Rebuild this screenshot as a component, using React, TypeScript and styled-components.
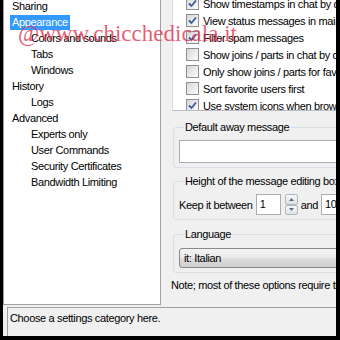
import React from 'react'
import styled, { createGlobalStyle, css } from 'styled-components'

const GlobalStyle = createGlobalStyle`
  html, body {
    margin: 0;
    padding: 0;
    background: #000;
  }
  body {
    font-family: 'Liberation Sans', Arial, sans-serif;
    font-size: 11px;
    letter-spacing: -0.35px;
    color: #000;
  }
`

const Frame = styled.div`
  position: relative;
  width: 340px;
  height: 340px;
  box-sizing: border-box;
  border-left: 3px solid #000;
  border-right: 4px solid #000;
  border-bottom: 4px solid #000;
  background: #f0f0f0;
  display: flex;
  flex-direction: column;
  overflow: hidden;
`

const Main = styled.div`
  display: flex;
  height: 305px;
  flex-shrink: 0;
`

const Tree = styled.div`
  width: 158px;
  box-sizing: border-box;
  background: #fff;
  border-left: 1px solid #a0a0a0;
  border-right: 1px solid #a0a0a0;
  border-bottom: 1px solid #a0a0a0;
  overflow: hidden;
`

const TreeList = styled.div`
  margin-top: -2px;
  display: flex;
  flex-direction: column;
`

const TreeRow = styled.div<{ $child?: boolean }>`
  height: 16px;
  display: flex;
  align-items: center;
  padding-left: ${(p) => (p.$child ? 27 : 8)}px;
  white-space: nowrap;
`

const TreeLabel = styled.span<{ $selected?: boolean }>`
  padding: 1px 2px;
  margin-left: -2px;
  line-height: 13px;
  ${(p) =>
    p.$selected &&
    css`
      background: #3399ff;
      color: #fff;
    `}
`

const Panel = styled.div`
  flex: 1;
  overflow: hidden;
  padding-left: 11px;
  display: flex;
  flex-direction: column;
`

const CheckList = styled.div`
  height: 111px;
  flex-shrink: 0;
  box-sizing: border-box;
  background: #fff;
  border-left: 1px solid #d5dfe5;
  border-bottom: 1px solid #b8bcc2;
  overflow: hidden;
`

const CheckRows = styled.div`
  margin-top: -5px;
`

const CheckRow = styled.div`
  height: 17px;
  display: flex;
  align-items: center;
  gap: 4px;
  padding-left: 13px;
  white-space: nowrap;
`

const Box = styled.span`
  width: 13px;
  height: 13px;
  box-sizing: border-box;
  border: 1px solid #8e8f8f;
  background: linear-gradient(135deg, #d6d6d6, #fdfdfd);
  display: flex;
  align-items: center;
  justify-content: center;
  flex-shrink: 0;
`

const Group = styled.fieldset<{ $top: number }>`
  margin: ${(p) => p.$top}px 0 0 1px;
  padding: 0 0 4px 5px;
  width: 220px;
  border: 1px solid #d5dfe5;
  border-radius: 3px;
  min-width: 0;
`

const Legend = styled.legend`
  padding: 0 1px;
  margin-left: 5px;
  line-height: 13px;
  white-space: nowrap;
`

const TextBox = styled.div<{ $h: number; $w?: number }>`
  height: ${(p) => p.$h}px;
  width: ${(p) => (p.$w ? `${p.$w}px` : 'auto')};
  box-sizing: border-box;
  background: #fff;
  border: 1px solid #abadb3;
  padding: 2px 3px;
  line-height: 14px;
  flex-shrink: 0;
`

const Row = styled.div`
  display: flex;
  align-items: center;
  height: 21px;
  gap: 3px;
  white-space: nowrap;
`

const Spinner = styled.div`
  display: flex;
  flex-direction: column;
  width: 13px;
  height: 21px;
  flex-shrink: 0;
  margin-left: 1px;
`

const SpinButton = styled.div`
  flex: 1;
  box-sizing: border-box;
  border: 1px solid #b1b7bf;
  border-radius: 2px;
  background: linear-gradient(#f6f7f9, #dde2e8);
  display: flex;
  align-items: center;
  justify-content: center;
`

const Select = styled.div`
  height: 20px;
  box-sizing: border-box;
  border: 1px solid #8a8a8a;
  border-radius: 3px;
  background: linear-gradient(#f3f3f3 0%, #ebebeb 50%, #dddddd 51%, #cfcfcf 100%);
  padding-left: 4px;
  display: flex;
  align-items: center;
`

const Note = styled.div`
  margin: 6px 0 0 -1px;
  line-height: 13px;
  white-space: nowrap;
`

const Status = styled.div`
  flex: 1;
  margin: 2px 0 0 4px;
  border-top: 1px solid #a0a0a0;
  border-left: 1px solid #a0a0a0;
  padding: 4px 2px;
  line-height: 13px;
`

const Watermark = styled.div`
  position: absolute;
  left: 15px;
  top: 21px;
  font-family: 'Liberation Serif', 'Times New Roman', serif;
  font-size: 23px;
  letter-spacing: 0;
  color: rgba(224, 48, 80, 0.78);
  white-space: nowrap;
  pointer-events: none;
`

const Check = () => (
  <svg width="9" height="9" viewBox="0 0 9 9">
    <path d="M1 4.5 L3.5 7 L8 1.5" fill="none" stroke="#3c5a9a" strokeWidth="1.8" />
  </svg>
)

const Arrow = ({ up }: { up?: boolean }) => (
  <svg width="5" height="3" viewBox="0 0 5 3">
    <path d={up ? 'M0 3 L2.5 0 L5 3 Z' : 'M0 0 L2.5 3 L5 0 Z'} fill="#5d6b82" />
  </svg>
)

const tree: { label: string; child?: boolean; selected?: boolean }[] = [
  { label: 'Sharing' },
  { label: 'Appearance', selected: true },
  { label: 'Colors and sounds', child: true },
  { label: 'Tabs', child: true },
  { label: 'Windows', child: true },
  { label: 'History' },
  { label: 'Logs', child: true },
  { label: 'Advanced' },
  { label: 'Experts only', child: true },
  { label: 'User Commands', child: true },
  { label: 'Security Certificates', child: true },
  { label: 'Bandwidth Limiting', child: true },
]

const options: [string, boolean][] = [
  ['Show timestamps in chat by default', true],
  ['View status messages in main chat', true],
  ['Filter spam messages', true],
  ['Show joins / parts in chat by default', false],
  ['Only show joins / parts for favorite users', false],
  ['Sort favorite users first', false],
  ['Use system icons when browsing files', true],
]

const App: React.FC = () => {
  return (
    <>
      <GlobalStyle />
      <Frame>
        <Main>
          <Tree>
            <TreeList>
              {tree.map((t) => (
                <TreeRow key={t.label} $child={t.child}>
                  <TreeLabel $selected={t.selected}>{t.label}</TreeLabel>
                </TreeRow>
              ))}
            </TreeList>
          </Tree>
          <Panel>
            <CheckList>
              <CheckRows>
                {options.map(([label, on]) => (
                  <CheckRow key={label}>
                    <Box>{on && <Check />}</Box>
                    <span>{label}</span>
                  </CheckRow>
                ))}
              </CheckRows>
            </CheckList>
            <Group $top={10}>
              <Legend>Default away message</Legend>
              <TextBox $h={23} style={{ marginTop: 6 }} />
            </Group>
            <Group $top={7}>
              <Legend>Height of the message editing box</Legend>
              <Row style={{ marginTop: 6 }}>
                <span>Keep it between</span>
                <TextBox $h={21} $w={25}>1</TextBox>
                <Spinner>
                  <SpinButton>
                    <Arrow up />
                  </SpinButton>
                  <SpinButton>
                    <Arrow />
                  </SpinButton>
                </Spinner>
                <span>and</span>
                <TextBox $h={21} $w={30}>10</TextBox>
              </Row>
            </Group>
            <Group $top={8}>
              <Legend>Language</Legend>
              <Select style={{ marginTop: 7 }}>it: Italian</Select>
            </Group>
            <Note>Note; most of these options require that you restart DC++</Note>
          </Panel>
        </Main>
        <Status>Choose a settings category here.</Status>
        <Watermark>@www.chicchedicala.it</Watermark>
      </Frame>
    </>
  )
}

export default App
